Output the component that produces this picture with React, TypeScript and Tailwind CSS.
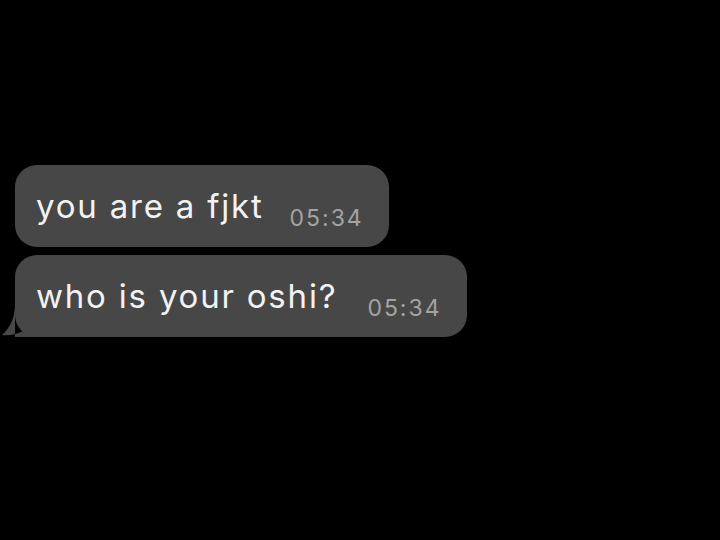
const font = { fontFamily: 'Inter, "Liberation Sans", sans-serif' };

interface BubbleProps {
  text: string;
  time: string;
  tail?: boolean;
}

const Bubble: React.FC<BubbleProps> = ({ text, time, tail }) => (
  <div className="relative self-start">
    {tail && (
      <svg
        className="absolute left-[-14px] bottom-0"
        width="40"
        height="34"
        viewBox="0 0 40 34"
      >
        <path d="M14 0 C14 14 10 24 1 32 C9 33 16 31 22 28 L40 34 L14 34 Z" fill="#474747" />
      </svg>
    )}
    <div className="relative flex items-end h-[82px] rounded-[22px] bg-[#474747] pl-[21px] pr-[25px] pb-[17px]">
      <span className="text-[33px] leading-none tracking-[1.8px] text-[#f2f2f2] mb-[7px]">{text}</span>
      <span className={tail ? 'ml-[30px] text-[23px] leading-none tracking-[2px] text-[#a3a3a3]' : 'ml-[26px] text-[23px] leading-none tracking-[2px] text-[#a3a3a3]'}>
        {time}
      </span>
    </div>
  </div>
);

export default function App() {
  return (
    <div className="w-[720px] h-[540px] bg-black overflow-hidden" style={font}>
      <div className="flex flex-col gap-[8px] pl-[15px] pt-[165px]">
        <Bubble text="you are a fjkt" time="05:34" />
        <Bubble text="who is your oshi?" time="05:34" tail />
      </div>
    </div>
  );
}
